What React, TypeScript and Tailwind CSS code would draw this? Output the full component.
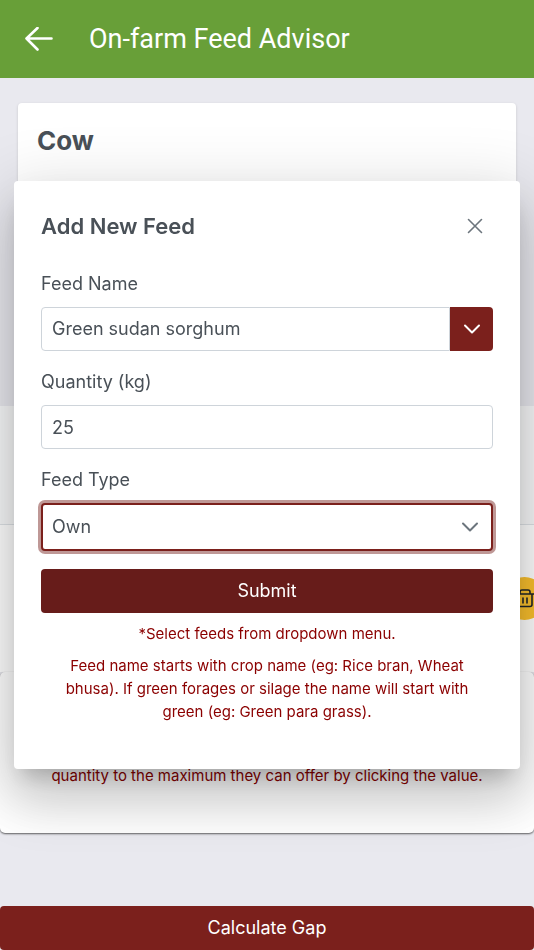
import { useState } from 'react'

const labelCls = 'block text-lg leading-6'
const fieldCls = 'min-w-0 border border-[#ced4da] bg-white px-[10px] text-lg leading-6 outline-none'

function ArrowLeftIcon() {
  return (
    <svg viewBox="0 0 28 24" className="h-6 w-7" fill="none" stroke="currentColor" strokeWidth="2.6" strokeLinecap="round" strokeLinejoin="round">
      <path d="M26.5 11.5H1.5M12.5 1L1.5 11.5L12.5 22.5" />
    </svg>
  )
}

function ChevronIcon() {
  return (
    <svg viewBox="0 0 18 18" className="size-[18px]" fill="none" stroke="currentColor" strokeWidth="2" strokeLinecap="round" strokeLinejoin="round">
      <path d="M2 5.5L9 12.5L16 5.5" />
    </svg>
  )
}

function CloseIcon() {
  return (
    <svg viewBox="0 0 18 18" className="size-[18px]" fill="none" stroke="currentColor" strokeWidth="1.6" strokeLinecap="round">
      <path d="M2.5 2.5L15.5 15.5M15.5 2.5L2.5 15.5" />
    </svg>
  )
}

function TrashIcon() {
  return (
    <svg viewBox="0 0 20 20" className="size-5" fill="none" stroke="currentColor" strokeWidth="1.6" strokeLinecap="round" strokeLinejoin="round">
      <path d="M1 5H19M5 5V3Q5 1 7 1H13Q15 1 15 3V5M3 5V15.5Q3 17.5 5 17.5H15Q17 17.5 17 15.5V5M8 9V14M12 9V14" />
    </svg>
  )
}

function FeedDialog({ onClose }: { onClose: () => void }) {
  const [name, setName] = useState('Green sudan sorghum')
  const [quantity, setQuantity] = useState('25')
  const [feedType, setFeedType] = useState('Own')

  return (
    <div className="fixed inset-0 z-50 flex items-center justify-center px-[14px]">
      <div
        role="dialog"
        aria-labelledby="feed-dialog-title"
        className="w-full rounded-[4px] bg-white px-[27px] pt-[27px] pb-[46px] shadow-[0_15px_20px_-9px_rgba(0,0,0,0.2),0_32px_52px_4px_rgba(0,0,0,0.14),0_12px_62px_11px_rgba(0,0,0,0.12)]"
      >
        <div className="mb-7 flex h-9 items-center justify-between">
          <h2 id="feed-dialog-title" className="text-[22px] font-semibold">Add New Feed</h2>
          <button type="button" aria-label="Close" onClick={onClose} className="flex size-9 items-center justify-center rounded-full text-[#6c757d]">
            <CloseIcon />
          </button>
        </div>
        <form onSubmit={(e) => e.preventDefault()}>
          <label htmlFor="feed-name" className={labelCls}>Feed Name</label>
          <div className="mt-[11px] mb-[19px] flex h-11">
            <input id="feed-name" type="text" value={name} onChange={(e) => setName(e.target.value)} className={`${fieldCls} flex-1 rounded-l-[4px]`} />
            <button type="button" aria-label="Show feeds" className="flex w-[43px] items-center justify-center rounded-r-[4px] bg-[#7b201c] text-white">
              <ChevronIcon />
            </button>
          </div>
          <label htmlFor="quantity" className={labelCls}>Quantity (kg)</label>
          <input
            id="quantity"
            type="text"
            inputMode="numeric"
            value={quantity}
            onChange={(e) => setQuantity(e.target.value)}
            className={`${fieldCls} mt-[11px] mb-[19px] block h-11 w-full rounded-[4px]`}
          />
          <label htmlFor="feed-type" className={labelCls}>Feed Type</label>
          <div className="relative mt-[11px] mb-[18px]">
            <select
              id="feed-type"
              value={feedType}
              onChange={(e) => setFeedType(e.target.value)}
              className="block h-12 w-full appearance-none rounded-[4px] border-2 border-[#7b201c] bg-white px-[9px] text-lg leading-6 ring-3 ring-[#bf9896] outline-none"
            >
              <option>Own</option>
              <option>Purchased</option>
            </select>
            <span className="pointer-events-none absolute inset-y-0 right-[14px] flex items-center text-[#6c757d]">
              <ChevronIcon />
            </span>
          </div>
          <button type="submit" className="block h-11 w-full rounded-[4px] bg-[#671c1a] text-lg text-white">Submit</button>
        </form>
        <div className="mt-[9px] text-center text-[15px] leading-[23px] text-[#8b0000]">
          <p>*Select feeds from dropdown menu.</p>
          <p className="mt-[9px] px-3">
            Feed name starts with crop name (eg: Rice bran, Wheat bhusa). If green forages or silage the name will start with green (eg: Green para grass).
          </p>
        </div>
      </div>
    </div>
  )
}

export default function App() {
  const [open, setOpen] = useState(true)

  return (
    <div className="flex min-h-screen flex-col overflow-hidden bg-[#e9e9ef] font-['Inter','Liberation_Sans',sans-serif] text-[#495057]">
      <header className="flex h-[78px] items-center gap-9 bg-[#689f38] px-[25px] text-white">
        <a href="#" aria-label="Back">
          <ArrowLeftIcon />
        </a>
        <h1 className="font-['Roboto',sans-serif] text-[27px] leading-9">On-farm Feed Advisor</h1>
      </header>
      <main className="flex flex-1 flex-col">
        <section className="mx-[18px] mt-[25px] h-[285px] rounded-[4px] bg-white px-[19px] py-5 shadow-[0_1px_3px_rgba(0,0,0,0.15)]">
          <h2 className="text-[26px] leading-9 font-bold">Cow</h2>
        </section>
        <section className="mt-[18px]">
          <div className="h-[119px] border-b border-[#dee2e6] bg-[#f8f9fa]" />
          <div className="flex h-[147px] items-center justify-end bg-white">
            <button type="button" aria-label="Delete feed" className="-mr-3 flex size-[43px] items-center justify-center rounded-full bg-[#fbc02d] text-[#212529]">
              <TrashIcon />
            </button>
          </div>
        </section>
        <section className="flex h-[161px] flex-col justify-end rounded-[5px] bg-white pb-[46px] text-center text-[15px] leading-[23px] text-[#8b0000] shadow-[0_1px_2px_rgba(0,0,0,0.6)]">
          <p>quantity to the maximum they can offer by clicking the value.</p>
        </section>
        <button type="button" onClick={() => setOpen(true)} className="mt-auto h-11 w-full rounded-[4px] bg-[#7b201c] text-lg text-white">
          Calculate Gap
        </button>
      </main>
      {open && <FeedDialog onClose={() => setOpen(false)} />}
    </div>
  )
}
